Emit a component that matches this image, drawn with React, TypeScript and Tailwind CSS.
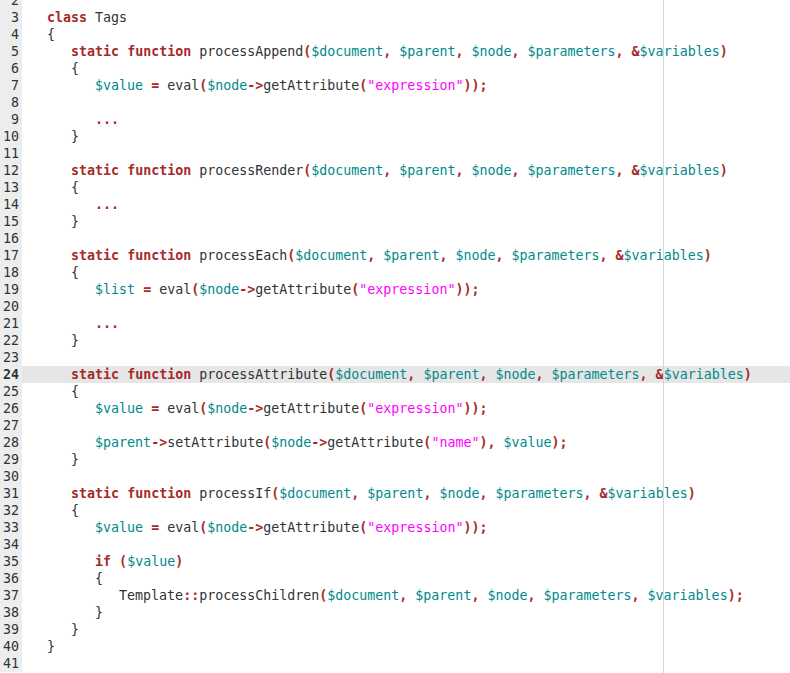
import React from "react";

const source = `
class Tags
{
   static function processAppend($document, $parent, $node, $parameters, &$variables)
   {
      $value = eval($node->getAttribute("expression"));

      ...
   }

   static function processRender($document, $parent, $node, $parameters, &$variables)
   {
      ...
   }

   static function processEach($document, $parent, $node, $parameters, &$variables)
   {
      $list = eval($node->getAttribute("expression"));

      ...
   }

   static function processAttribute($document, $parent, $node, $parameters, &$variables)
   {
      $value = eval($node->getAttribute("expression"));

      $parent->setAttribute($node->getAttribute("name"), $value);
   }

   static function processIf($document, $parent, $node, $parameters, &$variables)
   {
      $value = eval($node->getAttribute("expression"));

      if ($value)
      {
         Template::processChildren($document, $parent, $node, $parameters, $variables);
      }
   }
}
`;

const lines = source.split("\n").slice(0, 40);
const CURRENT = 24;

const tokenRe = /(\b(?:class|static|function|if)\b)|(\$\w+)|("[^"]*")|(->|::|\.\.\.|[()=,;&])/g;

function highlight(text: string) {
  const out: React.ReactNode[] = [];
  let last = 0;
  let m: RegExpExecArray | null;
  let k = 0;
  tokenRe.lastIndex = 0;
  while ((m = tokenRe.exec(text))) {
    if (m.index > last) out.push(<span key={k++}>{text.slice(last, m.index)}</span>);
    if (m[1]) out.push(<span key={k++} className="font-bold text-[#a52a2a]">{m[1]}</span>);
    else if (m[2]) out.push(<span key={k++} className="text-[#008a8c]">{m[2]}</span>);
    else if (m[3]) out.push(<span key={k++} className="text-[#ff00ff]">{m[3]}</span>);
    else out.push(<span key={k++} className="font-bold text-[#a52a2a]">{m[4]}</span>);
    last = m.index + m[0].length;
  }
  if (last < text.length) out.push(<span key={k++}>{text.slice(last)}</span>);
  return out;
}

export default function App() {
  return (
    <div className="relative w-[790px] h-[673px] overflow-hidden bg-white font-['DejaVu_Sans_Mono',monospace] text-[13.3px] leading-[17px] text-[#2e3436]">
      <div className="-mt-[8px] flex flex-col">
        {lines.map((line, i) => {
          const n = i + 2;
          const cur = n === CURRENT;
          return (
            <div key={n} className="flex h-[17px]">
              <div
                className={
                  "w-[22px] shrink-0 bg-[#ededed] pr-[3px] text-right text-[#2e3436] " +
                  (cur ? "font-bold" : "")
                }
              >
                {n}
              </div>
              <div className={"flex-1 whitespace-pre pl-[1px] " + (cur ? "bg-[#e6e6e6]" : "")}>
                {"   "}
                {highlight(line)}
              </div>
            </div>
          );
        })}
      </div>
      <div className="pointer-events-none absolute top-0 bottom-0 left-[663px] w-px bg-[#d6d6d6]" />
    </div>
  );
}
